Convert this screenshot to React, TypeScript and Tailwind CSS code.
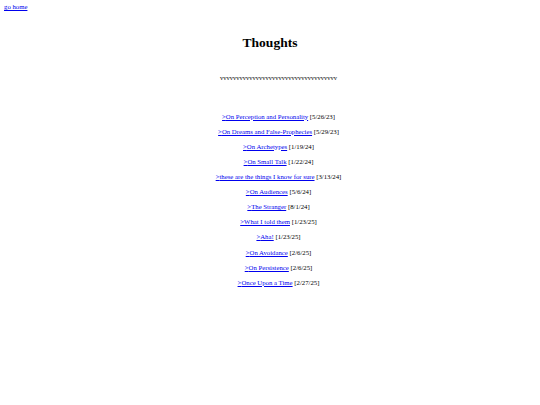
import React from 'react';

const posts: { title: string; date: string }[] = [
  { title: 'On Perception and Personality', date: '5/26/23' },
  { title: 'On Dreams and False-Prophecies', date: '5/29/23' },
  { title: 'On Archetypes', date: '1/19/24' },
  { title: 'On Small Talk', date: '1/22/24' },
  { title: 'these are the things I know for sure', date: '3/13/24' },
  { title: 'On Audiences', date: '5/6/24' },
  { title: 'The Stranger', date: '8/1/24' },
  { title: 'What I told them', date: '1/23/25' },
  { title: 'Aha!', date: '1/23/25' },
  { title: 'On Avoidance', date: '2/6/25' },
  { title: 'On Persistence', date: '2/6/25' },
  { title: 'Once Upon a Time', date: '2/27/25' },
];

const App: React.FC = () => {
  return (
    <div
      className="w-[540px] h-[405px] bg-white text-black text-[6.75px] leading-[7.75px]"
      style={{ fontFamily: '"Liberation Serif", "Times New Roman", serif' }}
    >
      <div className="pt-[3px] pl-[4px]">
        <a href="#" className="text-[#0000ee] underline">
          go home
        </a>
      </div>

      <h1 className="mt-[24px] text-center text-[13.5px] leading-[15.5px] font-bold">Thoughts</h1>

      <div className="pl-[17px]">
        <div className="mt-[24px] text-center text-[6.5px] leading-[7.75px]">
          {'v'.repeat(36)}
        </div>

        <ul className="mt-[27px] flex flex-col items-center">
          {posts.map((p) => (
            <li key={p.title} className="h-[15.1px] flex items-center">
              <a href="#" className="text-[#0000ee] underline">
                &gt;{p.title}
              </a>
              <span>&nbsp;[{p.date}]</span>
            </li>
          ))}
        </ul>
      </div>
    </div>
  );
};

export default App;
